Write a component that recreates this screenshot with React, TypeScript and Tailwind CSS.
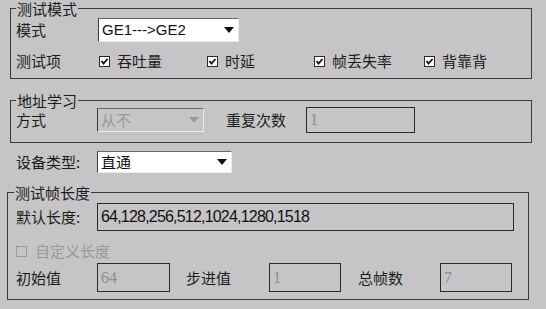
import React from "react";

const cjk = "font-['Noto_Sans_CJK_SC','Noto_Sans','Liberation_Sans',sans-serif]";
const latin = "font-['Liberation_Sans','Arial',sans-serif]";

function Arrow({ disabled }: { disabled?: boolean }) {
  return (
    <svg width="10" height="6" viewBox="0 0 10 6" className="shrink-0">
      <polygon points="0,0 10,0 5,6" fill={disabled ? "#9a989b" : "#111"} />
    </svg>
  );
}

function Dropdown({
  w,
  h,
  text,
  disabled,
  latinText,
}: {
  w: string;
  h: string;
  text: string;
  disabled?: boolean;
  latinText?: boolean;
}) {
  return (
    <div
      className={`${w} ${h} flex items-center justify-between pl-[3px] pr-[4px] border-t border-l border-t-[#6a6a6a] border-l-[#3a3a3a] border-r border-b border-r-[#ececec] border-b-[#ececec] ${
        disabled ? "bg-[#c6c4c7] text-[#9a989b]" : "bg-white text-[#111]"
      }`}
    >
      <span className={latinText ? `${latin} text-[15px]` : ""}>{text}</span>
      <Arrow disabled={disabled} />
    </div>
  );
}

function Field({ w, h, text }: { w: string; h: string; text: string }) {
  return (
    <div
      className={`${w} ${h} flex items-center pl-[3px] border border-[#2a2a2a] text-[#8e8c8f] font-['Liberation_Serif','Times_New_Roman',serif] text-[16px]`}
    >
      {text}
    </div>
  );
}

function Check({ checked = true, disabled }: { checked?: boolean; disabled?: boolean }) {
  return (
    <svg width="11" height="11" viewBox="0 0 11 11" className="shrink-0">
      <rect
        x="0.5"
        y="0.5"
        width="10"
        height="10"
        fill={disabled ? "#c6c4c7" : "#fff"}
        stroke={disabled ? "#9a989b" : "#2a2a2a"}
      />
      {checked && (
        <polyline points="2.5,5 4.5,7.5 8.5,3" fill="none" stroke="#111" strokeWidth="1.8" />
      )}
    </svg>
  );
}

function CheckItem({ label, w }: { label: string; w: string }) {
  return (
    <div className={`${w} flex items-center gap-[7px]`}>
      <Check />
      <span>{label}</span>
    </div>
  );
}

function Legend({ text, left }: { text: string; left: string }) {
  return (
    <span className={`absolute ${left} top-[-8px] px-[1px] bg-[#c6c4c7] leading-[16px]`}>
      {text}
    </span>
  );
}

export default function App() {
  return (
    <div
      className={`w-[546px] h-[309px] bg-[#c6c4c7] overflow-hidden ${cjk} text-[15px] leading-[18px] text-[#1c1c1c] pt-[8px]`}
    >
      {/* 测试模式 */}
      <div className="relative ml-[10px] w-[522px] h-[71px] border border-[#3a3a3a]">
        <Legend text="测试模式" left="left-[5px]" />
        <div className="flex flex-col pl-[5px] pt-[9px]">
          <div className="flex items-center h-[24px]">
            <span className="w-[82px]">模式</span>
            <Dropdown w="w-[141px]" h="h-[24px]" text="GE1--->GE2" latinText />
          </div>
          <div className="flex items-center h-[18px] mt-[10px]">
            <span className="w-[83px]">测试项</span>
            <CheckItem label="吞吐量" w="w-[108px]" />
            <CheckItem label="时延" w="w-[107px]" />
            <CheckItem label="帧丢失率" w="w-[110px]" />
            <CheckItem label="背靠背" w="w-[80px]" />
          </div>
        </div>
      </div>

      {/* 地址学习 */}
      <div className="relative ml-[10px] mt-[21px] w-[522px] h-[43px] border border-[#3a3a3a]">
        <Legend text="地址学习" left="left-[5px]" />
        <div className="flex items-center pl-[5px] pt-[6px] h-[32px]">
          <span className="w-[81px]">方式</span>
          <Dropdown w="w-[107px]" h="h-[24px]" text="从不" disabled />
          <span className="ml-[22px] w-[80px]">重复次数</span>
          <Field w="w-[109px]" h="h-[26px]" text="1" />
        </div>
      </div>

      {/* 设备类型 */}
      <div className="flex items-center ml-[16px] mt-[8px] h-[22px]">
        <span className="w-[81px]">设备类型:</span>
        <Dropdown w="w-[135px]" h="h-[22px]" text="直通" />
      </div>

      {/* 测试帧长度 */}
      <div className="relative ml-[7px] mt-[19px] w-[522px] h-[108px] border border-[#3a3a3a]">
        <Legend text="测试帧长度" left="left-[6px]" />
        <div className="flex flex-col pl-[8px] pt-[10px]">
          <div className="flex items-center h-[28px]">
            <span className="w-[81px]">默认长度:</span>
            <div
              className={`w-[417px] h-[28px] flex items-center pl-[3px] border border-[#2a2a2a] ${latin} text-[16px] tracking-[-0.8px] text-[#111]`}
            >
              64,128,256,512,1024,1280,1518
            </div>
          </div>
          <div className="flex items-center h-[18px] mt-[11px] gap-[8px] text-[#9a989b]">
            <Check checked={false} disabled />
            <span>自定义长度</span>
          </div>
          <div className="flex items-center h-[29px] mt-[3px]">
            <span className="w-[81px]">初始值</span>
            <Field w="w-[73px]" h="h-[29px]" text="64" />
            <span className="ml-[16px] w-[83px]">步进值</span>
            <Field w="w-[72px]" h="h-[29px]" text="1" />
            <span className="ml-[17px] w-[82px]">总帧数</span>
            <Field w="w-[72px]" h="h-[29px]" text="7" />
          </div>
        </div>
      </div>
    </div>
  );
}
